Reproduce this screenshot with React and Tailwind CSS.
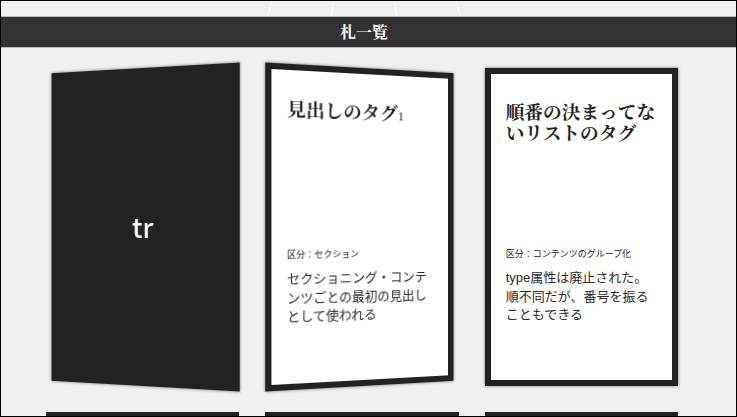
const cards = [
  { label: "tr" },
  {
    tilt: "right",
    title: "見出しのタグ",
    num: "1",
    kind: "区分：セクション",
    text: "セクショニング・コンテンツごとの最初の見出しとして使われる",
  },
  {
    title: "順番の決まってないリストのタグ",
    kind: "区分：コンテンツのグループ化",
    text: "type属性は廃止された。順不同だが、番号を振ることもできる",
  },
];

function Card({ card }) {
  if (card.label) {
    return (
      <div className="h-[318px] bg-[#222] flex items-center justify-center shadow-[0_0_3px_rgba(0,0,0,0.5)] [transform:perspective(645px)_rotateY(-13deg)]">
        <span className="text-white text-[27px] font-medium font-['Noto_Sans_CJK_JP',sans-serif]">{card.label}</span>
      </div>
    );
  }

  return (
    <div
      className={`h-[318px] bg-white border-[6px] border-[#222] shadow-[0_0_3px_rgba(0,0,0,0.5)] px-[15px] flex flex-col ${
        card.tilt === "right" ? "[transform:translateX(1px)_perspective(645px)_rotateY(13deg)]" : ""
      }`}
    >
      <h2 className="mt-[26px] h-[146px] text-[18.7px] leading-[21px] font-bold text-[#222] font-['Noto_Serif_CJK_JP','Liberation_Serif',serif]">
        {card.title}
        {card.num && <span className="text-[13px] font-normal font-['Liberation_Serif',serif]">{card.num}</span>}
      </h2>
      <div className="mt-[1px] text-[9px] leading-[14px] text-[#222] font-['Liberation_Sans','Noto_Sans_CJK_JP',sans-serif]">{card.kind}</div>
      <p className="mt-[8px] text-[13px] leading-[18.7px] text-[#2a2a2a] font-['Liberation_Sans','Noto_Sans_CJK_JP',sans-serif]">{card.text}</p>
    </div>
  );
}

export default function App() {
  return (
    <div className="h-[417px] overflow-hidden border border-black bg-[#f0f0f0]">
      <div className="h-[15px] pr-[9px] flex justify-center gap-[62px] overflow-hidden">
        <div className="w-px h-full bg-white rotate-[15deg]" />
        <div className="w-px h-full bg-white rotate-[8deg]" />
        <div className="w-px h-full bg-white -rotate-[8deg]" />
        <div className="w-px h-full bg-white -rotate-[15deg]" />
      </div>
      <h1 className="h-[32px] pr-[9px] pb-[1px] bg-[#333] border-y border-[#bbb] flex items-center justify-center text-white text-[16px] font-bold font-['Noto_Serif_CJK_JP','Liberation_Serif',serif]">
        札一覧
      </h1>
      <div className="grid grid-cols-3 gap-x-[26px] gap-y-[26px] pl-[45px] pr-[58px] pt-[20px]">
        {cards.map((card, i) => (
          <Card key={i} card={card} />
        ))}
        <div className="h-[318px] bg-[#222]" />
        <div className="h-[318px] bg-[#222]" />
        <div className="h-[318px] bg-[#222]" />
      </div>
    </div>
  );
}
